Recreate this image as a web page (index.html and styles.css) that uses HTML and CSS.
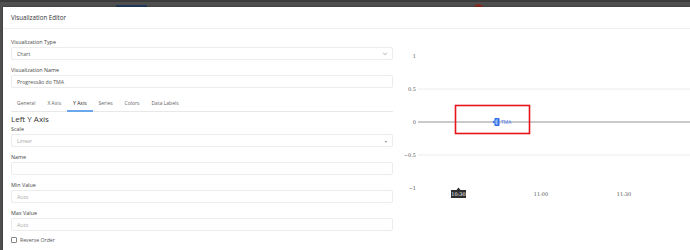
FILE: index.html
```html
<!DOCTYPE html>
<html lang="en">
<head>
    <meta charset="UTF-8">
    <title>Visualization Editor</title>
    <link rel="stylesheet" href="styles.css">
</head>
<body>
    <!-- page behind the dialog -->
    <div class="backdrop">
        <div class="bg-tab"></div>
        <div class="bg-avatar"></div>
    </div>

    <div class="modal">
        <div class="modal-header">Visualization Editor</div>
        <div class="modal-body">
            <div class="editor">
                <div class="field">
                    <label>Visualization Type</label>
                    <div class="input select">Chart <span class="chevron"></span></div>
                </div>
                <div class="field">
                    <label>Visualization Name</label>
                    <div class="input">Progressão do TMA</div>
                </div>

                <div class="tabs">
                    <span class="tab">General</span>
                    <span class="tab">X Axis</span>
                    <span class="tab active">Y Axis</span>
                    <span class="tab">Series</span>
                    <span class="tab">Colors</span>
                    <span class="tab">Data Labels</span>
                </div>

                <h4 class="section-title">Left Y Axis</h4>
                <div class="field">
                    <label>Scale</label>
                    <div class="input select placeholder">Linear <span class="caret"></span></div>
                </div>
                <div class="field">
                    <label>Name</label>
                    <div class="input"></div>
                </div>
                <div class="field">
                    <label>Min Value</label>
                    <div class="input placeholder">Auto</div>
                </div>
                <div class="field">
                    <label>Max Value</label>
                    <div class="input placeholder">Auto</div>
                </div>
                <div class="check-row"><span class="checkbox"></span>Reverse Order</div>
            </div>

            <!-- Chart preview -->
            <div class="preview">
                <svg class="chart" width="297" height="221" viewBox="393 29 297 221">
                    <g class="grid">
                        <line x1="418" y1="89" x2="690" y2="89"/>
                        <line x1="418" y1="155" x2="690" y2="155"/>
                    </g>
                    <line class="zero" x1="418" y1="122" x2="690" y2="122"/>
                    <g class="ylabels">
                        <text x="416" y="58">1</text>
                        <text x="416" y="91">0.5</text>
                        <text x="416" y="124">0</text>
                        <text x="416" y="157">−0.5</text>
                        <text x="416" y="190">−1</text>
                    </g>
                    <rect class="highlight" x="455.5" y="105.5" width="74" height="28"/>
                    <g class="marker">
                        <path d="M492.5 122 L494.5 120 L494.5 124 Z"/>
                        <rect x="494.5" y="118" width="5" height="8" rx="0.8"/>
                        <path class="glyph" d="M496 120 h2 M496 122 h2 M496 124 h2 M496 120 v4" />
                        <text x="501" y="124">TMA</text>
                    </g>
                    <g class="xlabels">
                        <path class="tip-arrow" d="M456.5 190 L458.5 187.5 L460.5 190 Z"/>
                        <rect class="tip" x="451" y="190" width="15" height="8"/>
                        <text class="tip-text" x="458.5" y="196">10:30</text>
                        <text x="541" y="196">11:00</text>
                        <text x="624" y="196">11:30</text>
                    </g>
                </svg>
            </div>
        </div>
    </div>
</body>
</html>
```

FILE: styles.css
```css
* {
    margin: 0;
    padding: 0;
    box-sizing: border-box;
}
body {
    font-family: "Open Sans", sans-serif;
    background: #4f4f4f;
    width: 690px;
    height: 250px;
    overflow: hidden;
    position: relative;
    color: #333;
}
/* Page behind the dialog */
.backdrop {
    height: 7px;
    border-top: 2px solid #3c3c3c;
}
.bg-tab {
    position: absolute;
    left: 116px;
    top: 5px;
    width: 31px;
    height: 3px;
    background: #1f3a5e;
}
.bg-avatar {
    position: absolute;
    left: 474px;
    top: 4px;
    width: 9px;
    height: 9px;
    border-radius: 50%;
    background: #8a2a1e;
}
/* Dialog */
.modal {
    position: relative;
    margin-left: 3px;
    background: #fff;
    height: 243px;
    box-shadow: 0 0 2px rgba(0, 0, 0, 0.4);
}
.modal-header {
    height: 22px;
    line-height: 21px;
    padding-left: 8px;
    font-size: 6.2px;
    color: #333;
    border-bottom: 1px solid #eee;
}
.modal-body {
    display: flex;
    padding-left: 8px;
}
.editor {
    width: 382px;
    padding-top: 9px;
}
.field {
    margin-bottom: 6px;
}
.field label {
    display: block;
    height: 9px;
    line-height: 8px;
    font-size: 5.4px;
    color: #444;
}
.input {
    position: relative;
    height: 13px;
    line-height: 12px;
    border: 1px solid #ececec;
    border-radius: 2px;
    padding-left: 5px;
    font-size: 5.2px;
    color: #555;
}
.input.placeholder {
    color: #aaa;
}
.chevron {
    position: absolute;
    right: 5px;
    top: 3px;
    width: 4px;
    height: 4px;
    border-right: 1px solid #bbb;
    border-bottom: 1px solid #bbb;
    transform: rotate(45deg) scale(0.8);
}
.caret {
    position: absolute;
    right: 5px;
    top: 6px;
    border-left: 1.5px solid transparent;
    border-right: 1.5px solid transparent;
    border-top: 2px solid #888;
}
/* Tabs */
.tabs {
    display: flex;
    height: 18px;
    border-bottom: 1px solid #e8e8e8;
}
.tab {
    padding: 0 6px;
    line-height: 18px;
    font-size: 5px;
    color: #666;
}
.tab.active {
    color: #222;
    border-bottom: 2px solid #6aa8ec;
    margin-bottom: -1px;
}
.section-title {
    height: 13px;
    line-height: 14px;
    font-size: 8px;
    font-weight: 500;
    color: #333;
}
.check-row {
    display: flex;
    align-items: center;
    height: 8px;
    margin-top: -1px;
    font-size: 5.2px;
    color: #555;
}
.checkbox {
    width: 6px;
    height: 6px;
    border: 1px solid #888;
    border-radius: 1px;
    margin-right: 3px;
}
/* Chart preview */
.preview {
    flex: 1;
}
.chart {
    display: block;
    font-family: "DejaVu Serif", serif;
    font-size: 5px;
}
.grid line {
    stroke: #ececec;
    stroke-width: 1;
}
.zero {
    stroke: #b8b8b8;
    stroke-width: 1.5;
}
.ylabels text {
    fill: #555;
    text-anchor: end;
}
.highlight {
    fill: none;
    stroke: #e8141c;
    stroke-width: 1.6;
}
.marker path,
.marker rect {
    fill: #2f6fec;
}
.marker .glyph {
    fill: none;
    stroke: #fff;
    stroke-width: 0.6;
}
.marker text {
    fill: #4d7ef2;
    font-family: "Open Sans", sans-serif;
    font-size: 5px;
}
.xlabels text {
    fill: #555;
    text-anchor: middle;
}
.tip,
.tip-arrow {
    fill: #2e2e2e;
}
.xlabels .tip-text {
    fill: #fff;
}
```
